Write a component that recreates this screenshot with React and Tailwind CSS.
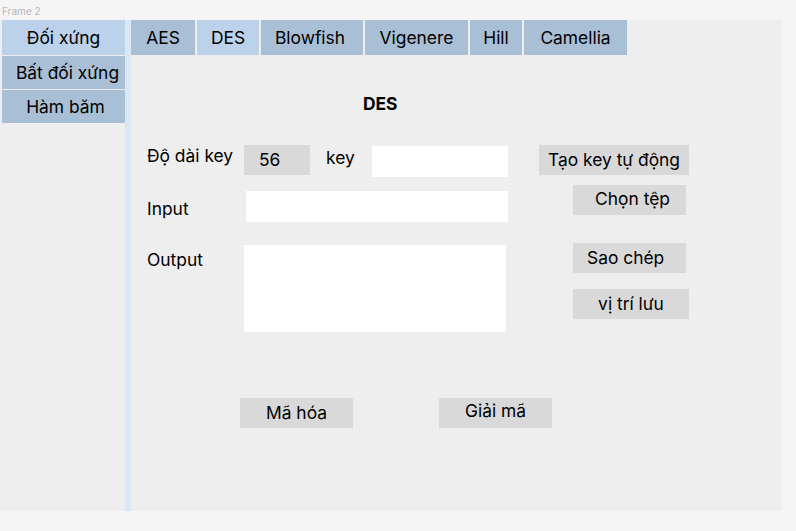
import React from 'react';

const tabs = [
    { name: 'AES', w: 'w-[64px]', active: false },
    { name: 'DES', w: 'w-[62px]', active: true },
    { name: 'Blowfish', w: 'w-[102px] pr-[4px]', active: false },
    { name: 'Vigenere', w: 'w-[103px]', active: false },
    { name: 'Hill', w: 'w-[52px]', active: false },
    { name: 'Camellia', w: 'w-[103px]', active: false },
];

const App = () => {
    return (
        <div className="w-[796px] h-[531px] bg-[#f5f5f5] text-black overflow-hidden text-[17.4px]" style={{ fontFamily: 'Inter, "Noto Sans", sans-serif' }}>
            {/* Frame label */}
            <div className="h-[20px] pl-[2px] pt-[5px] text-[10px] leading-[12px] text-[#b8b8b8]">Frame 2</div>

            {/* Frame */}
            <div className="w-[782px] h-[491px] bg-[#eeeeee] flex">
                {/* Sidebar */}
                <div className="w-[125px] flex flex-col gap-px pl-[2px]">
                    <div className="h-[35px] bg-[#bbd2ea] flex items-center justify-center pt-[2px]">Đối xứng</div>
                    <div className="h-[33px] bg-[#a9bfd5] flex items-center justify-center pt-[1px] pl-[8px]">Bất đối xứng</div>
                    <div className="h-[33px] bg-[#a9bfd5] flex items-center justify-center pt-[1px] pl-[4px]">Hàm băm</div>
                </div>
                <div className="w-[6px] bg-[#dbe7f4]" />

                {/* Main */}
                <div className="flex-1 flex flex-col">
                    <div className="h-[35px] flex gap-[2px]">
                        {tabs.map((t) => (
                            <div
                                key={t.name}
                                className={`${t.w} h-full flex items-center justify-center pt-[2px] ${t.active ? 'bg-[#bbd2ea]' : 'bg-[#a9bfd5]'}`}
                            >
                                {t.name}
                            </div>
                        ))}
                    </div>

                    <div className="pl-[232px] pt-[39px] h-[53px] text-[17.4px] font-bold leading-[20px]">DES</div>

                    <div className="flex pl-[16px] pt-[37px]">
                        {/* Left column */}
                        <div className="w-[361px] flex flex-col">
                            <div className="flex items-start h-[32px]">
                                <div className="w-[97px] leading-[20px] pt-[1px]">Độ dài key</div>
                                <div className="w-[66px] h-[30px] bg-[#d9d9d9] flex items-center pl-[15px]">56</div>
                                <div className="ml-[16px] w-[46px] leading-[20px] pt-[3px]">key</div>
                                <div className="w-[136px] h-[31px] mt-px bg-white" />
                            </div>
                            <div className="flex items-start mt-[14px]">
                                <div className="w-[99px] leading-[20px] pt-[8px]">Input</div>
                                <div className="w-[262px] h-[31px] bg-white" />
                            </div>
                            <div className="flex items-start mt-[23px]">
                                <div className="w-[97px] leading-[20px] pt-[5px]">Output</div>
                                <div className="w-[262px] h-[87px] bg-white" />
                            </div>
                        </div>

                        {/* Right column */}
                        <div className="ml-[31px] flex flex-col items-start">
                            <div className="w-[150px] h-[30px] bg-[#d9d9d9] flex items-center justify-center">Tạo key tự động</div>
                            <div className="ml-[34px] mt-[10px] w-[113px] h-[30px] bg-[#d9d9d9] flex items-center justify-center pl-[6px] pb-[2px]">Chọn tệp</div>
                            <div className="ml-[34px] mt-[28px] w-[113px] h-[30px] bg-[#d9d9d9] flex items-center pl-[14px]">Sao chép</div>
                            <div className="ml-[34px] mt-[16px] w-[116px] h-[30px] bg-[#d9d9d9] flex items-center justify-center">vị trí lưu</div>
                        </div>
                    </div>

                    <div className="flex pl-[109px] mt-[66px] gap-[86px]">
                        <div className="w-[113px] h-[30px] bg-[#d9d9d9] flex items-center justify-center pt-px">Mã hóa</div>
                        <div className="w-[113px] h-[30px] bg-[#d9d9d9] flex items-center justify-center pb-[4px]">Giải mã</div>
                    </div>
                </div>
            </div>
        </div>
    );
};

export default App;
